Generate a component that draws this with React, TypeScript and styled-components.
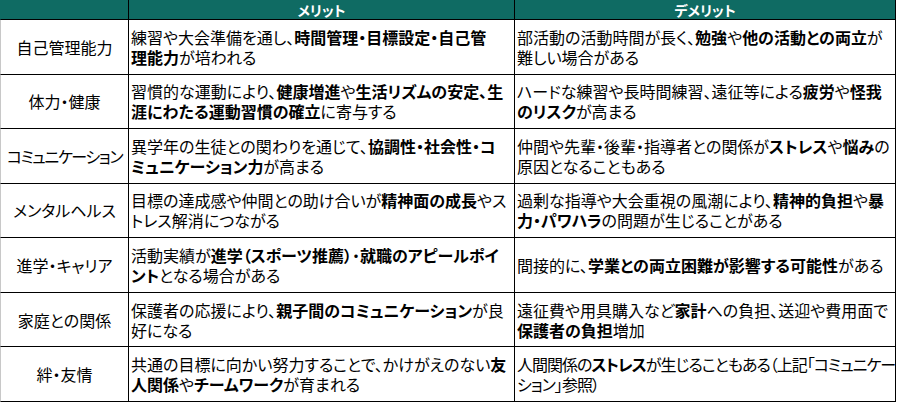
import React from 'react';
import styled, { createGlobalStyle } from 'styled-components';

const GlobalStyle = createGlobalStyle`
  html, body {
    margin: 0;
    padding: 0;
    background: #fff;
  }
  body {
    font-family: "Noto Sans CJK JP", "Noto Sans", sans-serif;
    color: #000;
  }
`;

type Row = {
  label: string;
  tightLabel?: boolean;
  merit: React.ReactNode;
  demerit: React.ReactNode;
  tightDemerit?: boolean;
};

const rows: Row[] = [
  {
    label: '自己管理能力',
    merit: (
      <>
        練習や大会準備を通し、<B>時間管理・目標設定・自己管</B>
        <br />
        <B>理能力</B>が培われる
      </>
    ),
    demerit: (
      <>
        部活動の活動時間が長く、<B>勉強</B>や<B>他の活動との両立</B>が
        <br />
        難しい場合がある
      </>
    ),
  },
  {
    label: '体力・健康',
    merit: (
      <>
        習慣的な運動により、<B>健康増進</B>や<B>生活リズムの安定、生</B>
        <br />
        <B>涯にわたる運動習慣の確立</B>に寄与する
      </>
    ),
    demerit: (
      <>
        ハードな練習や長時間練習、遠征等による<B>疲労</B>や<B>怪我</B>
        <br />
        <B>のリスク</B>が高まる
      </>
    ),
  },
  {
    label: 'コミュニケーション',
    tightLabel: true,
    merit: (
      <>
        異学年の生徒との関わりを通じて、<B>協調性・社会性・コ</B>
        <br />
        <B>ミュニケーション力</B>が高まる
      </>
    ),
    demerit: (
      <>
        仲間や先輩・後輩・指導者との関係が<B>ストレス</B>や<B>悩み</B>の
        <br />
        原因となることもある
      </>
    ),
  },
  {
    label: 'メンタルヘルス',
    merit: (
      <>
        目標の達成感や仲間との助け合いが<B>精神面の成長</B>やス
        <br />
        トレス解消につながる
      </>
    ),
    demerit: (
      <>
        過剰な指導や大会重視の風潮により、<B>精神的負担</B>や<B>暴</B>
        <br />
        <B>力・パワハラ</B>の問題が生じることがある
      </>
    ),
  },
  {
    label: '進学・キャリア',
    merit: (
      <>
        活動実績が<B>進学（スポーツ推薦）</B>・<B>就職のアピールポイ</B>
        <br />
        <B>ント</B>となる場合がある
      </>
    ),
    demerit: (
      <>
        間接的に、<B>学業との両立困難が影響する可能性</B>がある
      </>
    ),
  },
  {
    label: '家庭との関係',
    merit: (
      <>
        保護者の応援により、<B>親子間のコミュニケーション</B>が良
        <br />
        好になる
      </>
    ),
    demerit: (
      <>
        遠征費や用具購入など<B>家計</B>への負担、送迎や費用面で
        <br />
        <B>保護者の負担</B>増加
      </>
    ),
  },
  {
    label: '絆・友情',
    merit: (
      <>
        共通の目標に向かい努力することで、かけがえのない<B>友</B>
        <br />
        <B>人関係</B>や<B>チームワーク</B>が育まれる
      </>
    ),
    tightDemerit: true,
    demerit: (
      <>
        人間関係の<B>ストレス</B>が生じることもある（上記「コミュニケー
        <br />
        ション」参照）
      </>
    ),
  },
];

function B({ children }: { children: React.ReactNode }) {
  return <Strong>{children}</Strong>;
}

const App = () => {
  return (
    <>
      <GlobalStyle />
      <Table>
        <HeadCell $first />
        <HeadCell>メリット</HeadCell>
        <HeadCell>デメリット</HeadCell>
        {rows.map((row) => (
          <React.Fragment key={row.label}>
            <LabelCell $tight={row.tightLabel}>{row.label}</LabelCell>
            <TextCell>
              <Text>{row.merit}</Text>
            </TextCell>
            <TextCell>
              <Text $tight={row.tightDemerit}>{row.demerit}</Text>
            </TextCell>
          </React.Fragment>
        ))}
      </Table>
    </>
  );
};

export default App;

const Table = styled.div`
  display: grid;
  grid-template-columns: 129px 386px 381px;
  grid-template-rows: 20px repeat(7, 1fr);
  width: 896px;
  height: 402px;
  box-sizing: border-box;
`;

const HeadCell = styled.div<{ $first?: boolean }>`
  display: flex;
  align-items: center;
  justify-content: center;
  background: #0f6b63;
  color: #fff;
  font-size: 14px;
  font-weight: 700;
  line-height: 1;
  border-right: 1px solid #000;
  border-bottom: 1px solid #000;
  border-left: ${({ $first }) => ($first ? '1px solid #0f6b63' : 'none')};
  font-feature-settings: 'palt';
`;

const LabelCell = styled.div<{ $tight?: boolean }>`
  display: flex;
  align-items: center;
  justify-content: center;
  font-size: 16px;
  line-height: 20px;
  letter-spacing: ${({ $tight }) => ($tight ? '-1.4px' : '0')};
  border-left: 1px solid #c8c8c8;
  border-right: 1px solid #000;
  border-bottom: 1px solid #000;
  font-feature-settings: 'palt';
  white-space: nowrap;
  overflow: hidden;
`;

const TextCell = styled.div`
  display: flex;
  align-items: center;
  padding: 0 2px;
  border-right: 1px solid #000;
  border-bottom: 1px solid #000;
  overflow: hidden;
`;

const Text = styled.p<{ $tight?: boolean }>`
  margin: 0;
  font-size: 16px;
  line-height: 20px;
  letter-spacing: ${({ $tight }) => ($tight ? '-1px' : '0')};
  white-space: nowrap;
  font-feature-settings: 'palt';
`;

const Strong = styled.b`
  font-weight: 700;
`;
